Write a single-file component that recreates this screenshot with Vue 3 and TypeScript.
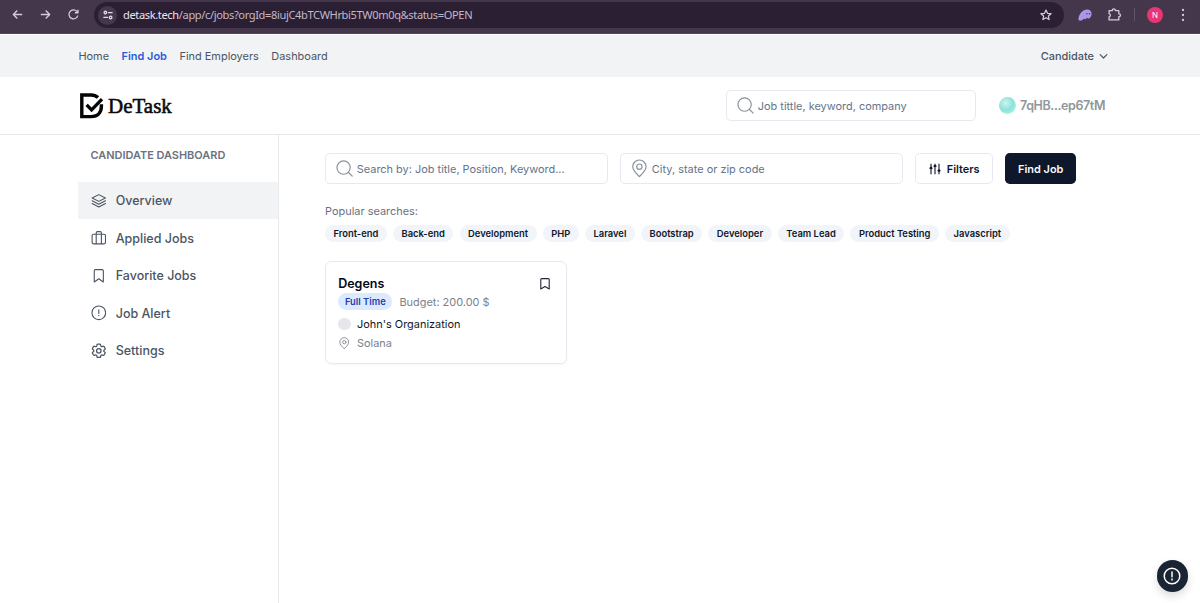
<script setup lang="ts">
interface MenuItem {
  label: string
  icon: 'layers' | 'briefcase' | 'bookmark' | 'alert' | 'settings'
}

const navLinks: string[] = ['Home', 'Find Job', 'Find Employers', 'Dashboard']
const activeLink = 'Find Job'

const menu: MenuItem[] = [
  { label: 'Overview', icon: 'layers' },
  { label: 'Applied Jobs', icon: 'briefcase' },
  { label: 'Favorite Jobs', icon: 'bookmark' },
  { label: 'Job Alert', icon: 'alert' },
  { label: 'Settings', icon: 'settings' },
]

const searches: string[] = [
  'Front-end', 'Back-end', 'Development', 'PHP', 'Laravel',
  'Bootstrap', 'Developer', 'Team Lead', 'Product Testing', 'Javascript',
]
</script>

<template>
  <div class="screen">
    <div class="browser">
      <svg class="b-icon" viewBox="0 0 16 16"><path d="M13 8H3.5M7.8 3.7 3.5 8l4.3 4.3" /></svg>
      <svg class="b-icon" viewBox="0 0 16 16"><path d="M3 8h9.5M8.2 3.7 12.5 8l-4.3 4.3" /></svg>
      <svg class="b-icon" viewBox="0 0 16 16"><path d="M12.6 9.2A4.8 4.8 0 1 1 11.6 4.7L12.7 6M12.8 2.8V6.1H9.5" /></svg>
      <div class="address">
        <span class="site">
          <svg viewBox="0 0 16 16"><circle cx="4.5" cy="4.7" r="1.7" /><path d="M8.5 4.7h5M2.5 11.3h5" /><circle cx="11.5" cy="11.3" r="1.7" /></svg>
        </span>
        <span class="url"><b>detask.tech</b>/app/c/jobs?orgId=8iujC4bTCWHrbi5TW0m0q&amp;status=OPEN</span>
        <svg class="star" viewBox="0 0 16 16"><path d="m8 2.3 1.7 3.8 4.1.4-3.1 2.7.9 4L8 11.1l-3.6 2.1.9-4-3.1-2.7 4.1-.4z" /></svg>
      </div>
      <svg class="ghost" viewBox="0 0 14 12"><path d="M.4 9.800C1 5 4.600.6 9.300.6c2.600 0 4.300 1.700 4.300 4 0 2.900-1.500 5-3.300 5-.7 0-1.200-.3-1.400-.8-.5.9-1.100 1.500-1.900 1.500-.6 0-1-.3-1.100-.8C5 10.900 3.800 11.700 2.400 11.700 1.100 11.700.3 11 .4 9.800Z" /><circle cx="8.900" cy="4.800" r=".8" /><circle cx="11.500" cy="4.800" r=".8" /></svg>
      <svg class="puzzle" viewBox="0 0 16 16"><path d="M2.2 3.8h3.5V3.5a1.6 1.6 0 0 1 3.2 0v.3h3.7v3.5h.3a1.5 1.5 0 0 1 0 3h-.3v3.5H2.2v-3.3a1.8 1.8 0 0 0 0-3.5Z" /></svg>
      <span class="divider"></span>
      <span class="profile">N</span>
      <svg class="dots" viewBox="0 0 4 14"><circle cx="2" cy="2" r="1.15" /><circle cx="2" cy="7" r="1.15" /><circle cx="2" cy="12" r="1.15" /></svg>
    </div>

    <nav class="topnav">
      <a v-for="link in navLinks" :key="link" :class="{ active: link === activeLink }">{{ link }}</a>
      <span class="role">Candidate
        <svg viewBox="0 0 10 10"><path d="m1.300 3 3.700 3.700L8.700 3" /></svg>
      </span>
    </nav>

    <header class="header">
      <svg class="mark" viewBox="0 0 25 26">
        <path d="M19 4.600C17.100 2.800 15 2 12 2H2.800v21.600h9.600c6.200 0 10-4 10-10.300v-2" fill="none" stroke="#050505" stroke-width="3.400" />
        <path d="m7.600 11.800 5 5L23 6.200" fill="none" stroke="#050505" stroke-width="3.300" />
      </svg>
      <span class="brand">DeTask</span>
      <div class="field head-search">
        <svg class="f-icon" viewBox="0 0 24 24"><circle cx="11" cy="11" r="8.500" /><path d="m17 17 5 5" /></svg>
        <span>Job tittle, keyword, company</span>
      </div>
      <span class="orb"></span>
      <span class="wallet">7qHB...ep67tM</span>
    </header>

    <div class="body">
      <aside class="sidebar">
        <h2>CANDIDATE DASHBOARD</h2>
        <a v-for="(item, i) in menu" :key="item.label" class="item" :class="{ selected: i === 0 }">
          <svg :viewBox="item.icon === 'settings' ? '1.500 1.500 21 21' : '0 0 24 24'">
            <path v-if="item.icon === 'layers'" d="M12 2.500 1.800 7.700 12 12.900l10.200-5.200ZM1.800 12 12 17.200 22.200 12M1.800 16.300 12 21.500l10.200-5.200" />
            <path v-else-if="item.icon === 'briefcase'" d="M4 6.500h16a2.300 2.300 0 0 1 2.300 2.300V19a2.300 2.300 0 0 1-2.300 2.300H4A2.300 2.300 0 0 1 1.700 19V8.800A2.300 2.300 0 0 1 4 6.500ZM8 21V4.500a2 2 0 0 1 2-2h4a2 2 0 0 1 2 2V21" />
            <path v-else-if="item.icon === 'bookmark'" d="m19 21.500-7-5-7 5V4.500a2 2 0 0 1 2-2h10a2 2 0 0 1 2 2Z" />
            <template v-else-if="item.icon === 'alert'"><circle cx="12" cy="12" r="10.500" /><path d="M12 7.500v5.500M12 16v.4" /></template>
            <template v-else>
              <path d="M9.594 3.940c.090-.542.560-.940 1.110-.940h2.593c.550 0 1.020.398 1.110.940l.213 1.281c.063.374.313.686.645.870.074.040.147.083.220.127.325.196.720.257 1.075.124l1.217-.456a1.125 1.125 0 0 1 1.370.490l1.296 2.247a1.125 1.125 0 0 1-.260 1.431l-1.003.827c-.293.241-.438.613-.430.992a7.723 7.723 0 0 1 0 .255c-.008.378.137.750.430.991l1.004.827c.424.350.534.955.260 1.430l-1.298 2.247a1.125 1.125 0 0 1-1.369.491l-1.217-.456c-.355-.133-.750-.072-1.076.124a6.470 6.470 0 0 1-.220.128c-.331.183-.581.495-.644.869l-.213 1.281c-.090.543-.560.940-1.110.940h-2.594c-.550 0-1.019-.398-1.110-.940l-.213-1.281c-.062-.374-.312-.686-.644-.870a6.520 6.520 0 0 1-.220-.127c-.325-.196-.720-.257-1.076-.124l-1.217.456a1.125 1.125 0 0 1-1.369-.490l-1.297-2.247a1.125 1.125 0 0 1 .260-1.431l1.004-.827c.292-.240.437-.613.430-.991a6.932 6.932 0 0 1 0-.255c.007-.380-.138-.751-.430-.992l-1.004-.827a1.125 1.125 0 0 1-.260-1.430l1.297-2.247a1.125 1.125 0 0 1 1.370-.491l1.216.456c.356.133.751.072 1.076-.124.072-.044.146-.086.220-.128.332-.183.582-.495.644-.869l.214-1.280Z" />
              <circle cx="12" cy="12" r="3" />
            </template>
          </svg>
          <span>{{ item.label }}</span>
        </a>
      </aside>

      <main class="main">
        <div class="filters">
          <div class="field grow">
            <svg class="f-icon" viewBox="0 0 24 24"><circle cx="11" cy="11" r="8.500" /><path d="m17 17 5 5" /></svg>
            <span>Search by: Job title, Position, Keyword...</span>
          </div>
          <div class="field grow">
            <svg class="f-icon" viewBox="0 0 24 24"><path d="M12 22.500C8 18.500 3.500 14.500 3.500 9.800a8.500 8.500 0 0 1 17 0c0 4.700-4.500 8.700-8.500 12.700Z" /><circle cx="12" cy="9.800" r="3.400" /></svg>
            <span>City, state or zip code</span>
          </div>
          <button class="btn outline">
            <svg viewBox="0 0 15 15"><path d="M2.500 1v4M2.500 8v6M7.500 1v1.500M7.500 5.500V14M12.500 1v7M12.500 11v3M.800 6.500h3.400M5.800 4h3.400M10.800 9.500h3.400" /><circle cx="2.500" cy="6.500" r="1" /><circle cx="7.500" cy="4" r="1" /><circle cx="12.500" cy="9.500" r="1" /></svg>
            Filters
          </button>
          <button class="btn solid">Find Job</button>
        </div>

        <p class="popular">Popular searches:</p>
        <div class="tags">
          <span v-for="tag in searches" :key="tag" class="tag">{{ tag }}</span>
        </div>

        <article class="card">
          <div class="card-head">
            <h3>Degens</h3>
            <svg viewBox="0 0 12 14"><path d="M1.800 12V2.600c0-.6.400-1 1-1h6.400c.6 0 1 .4 1 1V12L6 9.600Z" /></svg>
          </div>
          <div class="meta"><span class="type">Full Time</span><span>Budget: 200.00 $</span></div>
          <div class="org"><i class="avatar"></i><span>John's Organization</span></div>
          <div class="place">
            <svg viewBox="0 0 24 24"><path d="M12 22.500C8 18.500 3.500 14.500 3.500 9.800a8.500 8.500 0 0 1 17 0c0 4.700-4.500 8.700-8.500 12.700Z" /><circle cx="12" cy="9.800" r="3.200" /></svg>
            <span>Solana</span>
          </div>
        </article>
      </main>
    </div>

    <button class="help">
      <svg viewBox="0 0 18 18"><circle cx="9" cy="9" r="7.800" /><path d="M9 5v4.700M9 12v1" /></svg>
    </button>
  </div>
</template>

<style>
body { margin: 0; overflow: hidden; }
</style>

<style scoped>
* { box-sizing: border-box; }
.screen {
  position: relative;
  width: 1200px;
  height: 603px;
  display: flex;
  flex-direction: column;
  overflow: hidden;
  background: #fff;
  font-family: Inter, "Liberation Sans", sans-serif;
  font-size: 10.94px;
  color: #4b5563;
}
svg { display: block; flex: none; fill: none; stroke: currentColor; stroke-linecap: round; stroke-linejoin: round; }
h2, h3, p { margin: 0; }
button { border: 0; font: inherit; padding: 0; }

.browser {
  height: 34px;
  flex: none;
  display: flex;
  align-items: center;
  background: #44364b;
  border-bottom: 1px solid #55475b;
  color: #d5cad9;
  padding: 0 14px 4px 10px;
}
.b-icon { width: 15px; height: 15px; margin-right: 13px; stroke-width: 1.4; stroke-linecap: butt; }
.address {
  width: 970px;
  height: 26px;
  margin-top: 1px;
  border-radius: 13px;
  background: #2b2033;
  display: flex;
  align-items: center;
  padding: 0 11px 0 4px;
}
.site { width: 19px; height: 19px; border-radius: 50%; background: #44384d; display: flex; align-items: center; justify-content: center; }
.site svg { width: 12px; height: 12px; stroke-width: 1.7; color: #e5dbe8; }
.url { margin-left: 6px; font: 11.1px/16px "Noto Sans", sans-serif; letter-spacing: -.38px; color: #c3b7c9; white-space: nowrap; }
.url b { font-weight: 400; color: #ece3ef; }
.star { width: 14px; height: 14px; margin-left: auto; stroke-width: 1.4; }
.ghost { width: 14px; height: 12px; margin-left: 14px; stroke: none; fill: #a998e8; }
.ghost circle { fill: #4b3c76; }
.puzzle { width: 15px; height: 15px; margin-left: 15px; stroke-width: 1.4; }
.divider { width: 1px; height: 13px; margin-left: 12px; background: #62536a; }
.profile { width: 16px; height: 16px; margin-left: 12px; border-radius: 50%; background: #e83675; color: #fff; font-size: 8px; display: flex; align-items: center; justify-content: center; }
.dots { width: 4px; height: 14px; margin-left: 18px; fill: currentColor; stroke: none; }

.topnav {
  height: 43px;
  flex: none;
  display: flex;
  align-items: center;
  gap: 12.5px;
  padding: 0 92px 0 78.4px;
  background: #f2f3f5;
  border-top: 1px solid #fff;
}
.topnav a.active { color: #2b5bdc; font-weight: 600; }
.role { margin-left: auto; display: flex; align-items: center; gap: 5px; font-weight: 500; }
.role svg { width: 9px; height: 9px; stroke-width: 1.3; }

.header {
  height: 58px;
  flex: none;
  display: flex;
  align-items: center;
  border-bottom: 1px solid #e5e7eb;
  padding: 0 95px 0 79px;
}
.mark { width: 25px; height: 26px; stroke-linecap: butt; stroke-linejoin: miter; }
.brand { margin-left: 4px; font: 400 21px/26px "Liberation Serif", serif; -webkit-text-stroke: .55px #0a0a0a; color: #0a0a0a; }
.field {
  height: 31.25px;
  display: flex;
  align-items: center;
  border: 1px solid #e5e9f0;
  border-radius: 4.7px;
  padding-left: 9px;
  color: #64748b;
  white-space: nowrap;
}
.f-icon { width: 18.75px; height: 18.75px; margin-right: 3px; stroke-width: 1.5; color: #8b919c; }
.head-search { width: 250px; margin-left: auto; }
.orb { width: 17px; height: 17px; margin-left: 23px; border-radius: 50%; background: radial-gradient(circle at 40% 35%, #cdf5ef 0, #8be3d8 48%, #9bece2 65%, #d8f8f4 100%); }
.wallet { margin-left: 4px; width: 85px; font-size: 12.5px; font-weight: 600; letter-spacing: -.4px; color: #8f979a; white-space: nowrap; }

.body { flex: 1; display: flex; padding-left: 78px; }
.sidebar { width: 200.5px; border-right: 1px solid #e8eaee; flex: none; }
.sidebar h2 { height: 46.500px; padding: 13px 0 0 12.5px; font-size: 10.94px; line-height: 15px; font-weight: 600; color: #6b7280; }
.item { height: 37.5px; display: flex; align-items: center; gap: 9.6px; padding: .5px 0 0 12.5px; font-size: 12.5px; font-weight: 500; color: #4b5563; }
.item.selected { background: #f2f3f5; }
.item svg { width: 15.6px; height: 15.6px; stroke-width: 1.7; }

.main { padding: 18px 0 0 46.5px; width: 798px; }
.filters { display: flex; gap: 12.3px; }
.grow { width: 282.8px; }
.btn { height: 31.25px; border-radius: 4.7px; font-weight: 600; display: flex; align-items: center; justify-content: center; white-space: nowrap; }
.outline { width: 78px; gap: 6px; border: 1px solid #e5e9f0; background: #fff; color: #0f172a; }
.outline svg { width: 12px; height: 12px; stroke-width: 1.4; stroke-linecap: butt; }
.solid { width: 70.5px; background: #0f172a; color: #f8fafc; }
.popular { margin-top: 19px; line-height: 16px; color: #6b7280; }
.tags { display: flex; gap: 6.25px; margin-top: 5.7px; }
.tag { height: 17.2px; padding: 0 8.46px; border-radius: 9px; background: #f1f5f9; color: #0f172a; font-size: 9.38px; font-weight: 600; line-height: 17px; white-space: nowrap; }

.card { width: 242px; height: 102.5px; margin-top: 19px; padding: 13.2px 12.2px; border: 1px solid #e5e9f0; border-radius: 6.25px; box-shadow: 0 1px 2px rgb(0 0 0 / 4%); }
.card-head { display: flex; justify-content: space-between; height: 17.2px; }
.card-head h3 { font-size: 12.5px; line-height: 18px; font-weight: 600; color: #020817; }
.card-head svg { width: 12px; height: 14px; margin: 2px 3px 0 0; stroke-width: 1.1; color: #222735; }
.meta { display: flex; align-items: center; gap: 7px; height: 18px; color: #7b818b; }
.type { height: 17px; border-radius: 9px; padding: 0 6.7px; background: #dbeafe; color: #1e40af; font-size: 9.38px; font-weight: 600; line-height: 17px; }
.org, .place { display: flex; align-items: center; gap: 6.25px; }
.org { height: 17px; margin-top: 5px; color: #111827; }
.avatar { width: 12.5px; height: 12.5px; border-radius: 50%; background: #e5e7eb; }
.place { height: 18px; margin-top: 1.400px; color: #7b818b; }
.place svg { width: 12.5px; height: 12.5px; stroke-width: 1.6; }

.help { position: absolute; right: 12px; bottom: 11.5px; width: 31.5px; height: 31.5px; border-radius: 50%; background: #1a2533; color: #fff; display: flex; align-items: center; justify-content: center; box-shadow: 0 4px 8px rgb(0 0 0 / 14%); }
.help svg { width: 18px; height: 18px; stroke-width: 1.5; }
</style>
